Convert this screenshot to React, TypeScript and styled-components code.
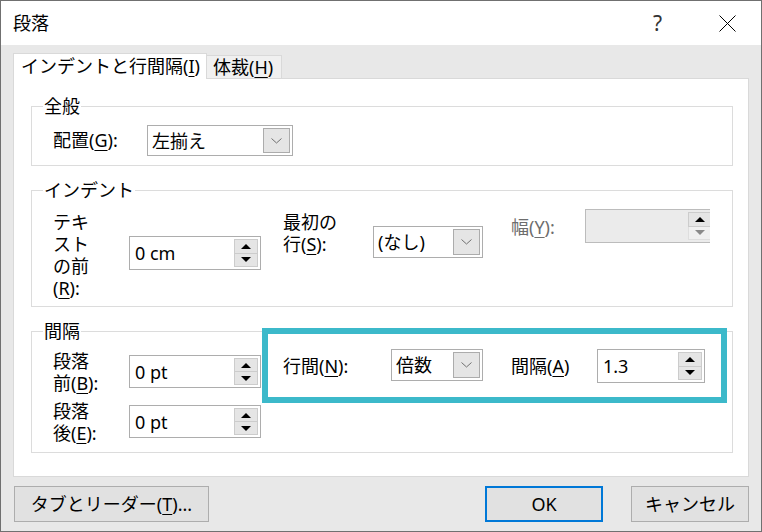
import React from "react";
import styled, { createGlobalStyle } from "styled-components";

const FONT = `"Noto Sans", "Noto Sans CJK JP", sans-serif`;

const GlobalStyle = createGlobalStyle`
  html, body { margin: 0; padding: 0; background: #ffffff; }
  body { font-family: ${FONT}; }
`;

const Window = styled.div`
  width: 762px;
  height: 532px;
  box-sizing: border-box;
  border: 1px solid #707070;
  background: #e8e8e8;
  display: flex;
  flex-direction: column;
  font-family: ${FONT};
  font-size: 18px;
  color: #000;
`;

const TitleBar = styled.div`
  height: 44px;
  flex: none;
  background: #ffffff;
  display: flex;
  align-items: center;
  padding-left: 12px;
`;

const Title = styled.div`
  flex: 1;
  line-height: 24px;
`;

const HelpGlyph = styled.span`
  width: 10px;
  font-size: 21px;
  line-height: 24px;
  color: #333;
  margin-right: 56px;
`;

const CloseIcon = styled.svg`
  width: 17px;
  height: 17px;
  margin-right: 25px;
  margin-top: 1px;
`;

const Body = styled.div`
  flex: 1;
  min-height: 0;
  display: flex;
  flex-direction: column;
  padding: 8px 12px 0 12px;
`;

const TabStrip = styled.div`
  display: flex;
  align-items: flex-end;
  height: 25px;
  flex: none;
`;

const Tab = styled.div<{ $active?: boolean }>`
  box-sizing: border-box;
  display: flex;
  align-items: center;
  line-height: 22px;
  border: 1px solid #d9d9d9;
  border-bottom: none;
  ${(p) =>
    p.$active
      ? `
    width: 194px;
    height: 26px;
    margin-bottom: -1px;
    padding: 0 0 1px 7px;
    background: #ffffff;
    position: relative;
    z-index: 1;
  `
      : `
    width: 75px;
    height: 23px;
    border-left: none;
    padding-left: 6px;
    background: #f0f0f0;
  `}
`;

const Panel = styled.div`
  flex: 1;
  box-sizing: border-box;
  background: #ffffff;
  border: 1px solid #d9d9d9;
  padding: 17px 15px 0 17px;
  display: flex;
  flex-direction: column;
  gap: 14px;
`;

const Group = styled.fieldset`
  margin: 0;
  padding: 0;
  min-width: 0;
  border: 1px solid #dcdcdc;
`;

const Legend = styled.legend`
  margin-left: 11px;
  padding: 0 1px;
  font-size: 18px;
  line-height: 20px;
`;

const GroupBody = styled.div<{ $pt: number; $pb: number }>`
  padding: ${(p) => p.$pt}px 0 ${(p) => p.$pb}px 21px;
  display: flex;
  flex-direction: column;
  gap: 6px;
`;

const Row = styled.div`
  display: flex;
  align-items: flex-start;
`;

const Label = styled.div<{ $w: number; $mt?: number; $ml?: number; $muted?: boolean }>`
  flex: none;
  width: ${(p) => p.$w}px;
  margin-top: ${(p) => p.$mt ?? 0}px;
  margin-left: ${(p) => p.$ml ?? 0}px;
  line-height: 22px;
  color: ${(p) => (p.$muted ? "#6d6d6d" : "#000")};
`;

const Key = styled.span`
  text-decoration: underline;
  text-decoration-thickness: 1px;
  text-underline-offset: 3px;
`;

const Combo = styled.div<{ $w: number; $h: number; $mt?: number }>`
  flex: none;
  box-sizing: border-box;
  width: ${(p) => p.$w}px;
  height: ${(p) => p.$h}px;
  margin-top: ${(p) => p.$mt ?? 0}px;
  border: 1px solid #adadad;
  background: #ffffff;
  display: flex;
`;

const FieldText = styled.div<{ $pl?: number }>`
  flex: 1;
  display: flex;
  align-items: center;
  padding-left: ${(p) => p.$pl ?? 4}px;
  line-height: 22px;
  white-space: nowrap;
`;

const ComboButton = styled.div`
  width: 27px;
  margin: 2px 2px 2px 0;
  box-sizing: border-box;
  background: #e5e5e5;
  border: 1px solid #acacac;
  display: flex;
  align-items: center;
  justify-content: center;
`;

const Spin = styled.div<{ $w: number; $h: number; $mt?: number; $disabled?: boolean }>`
  flex: none;
  box-sizing: border-box;
  width: ${(p) => p.$w}px;
  height: ${(p) => p.$h}px;
  margin-top: ${(p) => p.$mt ?? 0}px;
  border: 1px solid ${(p) => (p.$disabled ? "#bcbcbc" : "#adadad")};
  background: ${(p) => (p.$disabled ? "#ebebeb" : "#ffffff")};
  display: flex;
`;

const SpinColumn = styled.div`
  width: 24px;
  margin: 2px 2px 2px 0;
  display: flex;
  flex-direction: column;
`;

const SpinButton = styled.div<{ $faded?: boolean }>`
  flex: 1;
  box-sizing: border-box;
  background: ${(p) => (p.$faded ? "#f0f0f0" : "#e5e5e5")};
  border: 1px solid ${(p) => (p.$faded ? "#dedede" : "#cccccc")};
  display: flex;
  align-items: center;
  justify-content: center;
  & + & {
    border-top: none;
  }
`;

const Clip = styled.div<{ $w: number; $mt?: number }>`
  flex: none;
  width: ${(p) => p.$w}px;
  overflow: hidden;
  margin-top: ${(p) => p.$mt ?? 0}px;
`;

const Highlighted = styled.div`
  position: relative;
  display: flex;
  align-items: flex-start;
  margin-left: 22px;
  &::before {
    content: "";
    position: absolute;
    left: -21px;
    top: -21px;
    width: 465px;
    height: 75px;
    box-sizing: border-box;
    border: 6px solid #3cb9ca;
    pointer-events: none;
    z-index: 2;
  }
`;

const Footer = styled.div`
  flex: none;
  display: flex;
  align-items: center;
  padding: 9px 0 9px 1px;
`;

const Button = styled.button<{ $w: number; $primary?: boolean; $ml?: number }>`
  box-sizing: border-box;
  width: ${(p) => p.$w}px;
  height: 36px;
  margin-left: ${(p) => p.$ml ?? 0}px;
  background: #e1e1e1;
  border: ${(p) => (p.$primary ? "2px solid #0078d7" : "1px solid #adadad")};
  font-family: ${FONT};
  font-size: 18px;
  line-height: 22px;
  color: #000;
  padding: 0;
  border-radius: 0;
`;

const Spacer = styled.div`
  flex: 1;
`;

const Chevron = () => (
  <svg width="11" height="6" viewBox="0 0 11 6">
    <polyline points="0.5,0.5 5.5,5 10.5,0.5" fill="none" stroke="#707070" strokeWidth="1" />
  </svg>
);

const Arrow = ({ dir, color = "#000" }: { dir: "up" | "down"; color?: string }) => (
  <svg width="10" height="5" viewBox="0 0 10 5">
    <polygon points={dir === "up" ? "0,5 10,5 5,0" : "0,0 10,0 5,5"} fill={color} />
  </svg>
);

const Dropdown = ({ value, w, h, mt }: { value: string; w: number; h: number; mt?: number }) => (
  <Combo $w={w} $h={h} $mt={mt}>
    <FieldText>{value}</FieldText>
    <ComboButton>
      <Chevron />
    </ComboButton>
  </Combo>
);

const Spinner = ({
  value,
  w,
  h,
  mt,
  disabled,
}: {
  value: string;
  w: number;
  h: number;
  mt?: number;
  disabled?: boolean;
}) => (
  <Spin $w={w} $h={h} $mt={mt} $disabled={disabled}>
    <FieldText $pl={5}>{value}</FieldText>
    <SpinColumn>
      <SpinButton>
        <Arrow dir="up" />
      </SpinButton>
      <SpinButton $faded={disabled}>
        <Arrow dir="down" color={disabled ? "#8a8a8a" : "#000"} />
      </SpinButton>
    </SpinColumn>
  </Spin>
);

export default function App() {
  return (
    <>
      <GlobalStyle />
      <Window>
        <TitleBar>
          <Title>段落</Title>
          <HelpGlyph>?</HelpGlyph>
          <CloseIcon viewBox="0 0 17 17">
            <line x1="0.5" y1="0.5" x2="16.5" y2="16.5" stroke="#000" strokeWidth="1" />
            <line x1="16.5" y1="0.5" x2="0.5" y2="16.5" stroke="#000" strokeWidth="1" />
          </CloseIcon>
        </TitleBar>
        <Body>
          <TabStrip>
            <Tab $active>
              インデントと行間隔(<Key>I</Key>)
            </Tab>
            <Tab>
              体裁(<Key>H</Key>)
            </Tab>
          </TabStrip>
          <Panel>
            <Group>
              <Legend>全般</Legend>
              <GroupBody $pt={9} $pb={9}>
                <Row>
                  <Label $w={94} $mt={4}>
                    配置(<Key>G</Key>):
                  </Label>
                  <Dropdown value="左揃え" w={146} h={31} />
                </Row>
              </GroupBody>
            </Group>

            <Group>
              <Legend>インデント</Legend>
              <GroupBody $pt={9} $pb={7}>
                <Row>
                  <Label $w={76} $mt={2}>
                    テキ
                    <br />
                    スト
                    <br />
                    の前
                    <br />(<Key>R</Key>):
                  </Label>
                  <Spinner value="0 cm" w={132} h={34} mt={27} />
                  <Label $w={90} $mt={2} $ml={22}>
                    最初の
                    <br />
                    行(<Key>S</Key>):
                  </Label>
                  <Dropdown value="(なし)" w={110} h={32} mt={17} />
                  <Label $w={74} $mt={7} $ml={28} $muted>
                    幅(<Key>Y</Key>):
                  </Label>
                  <Clip $w={125}>
                    <Spinner value="" w={130} h={34} disabled />
                  </Clip>
                </Row>
              </GroupBody>
            </Group>

            <Group>
              <Legend>間隔</Legend>
              <GroupBody $pt={8} $pb={8}>
                <Row>
                  <Label $w={76} $mt={1}>
                    段落
                    <br />
                    前(<Key>B</Key>):
                  </Label>
                  <Spinner value="0 pt" w={132} h={33} mt={6} />
                  <Highlighted>
                    <Label $w={108} $mt={6}>
                      行間(<Key>N</Key>):
                    </Label>
                    <Dropdown value="倍数" w={92} h={32} />
                    <Label $w={86} $mt={6} $ml={28}>
                      間隔(<Key>A</Key>)
                    </Label>
                    <Spinner value="1.3" w={108} h={34} />
                  </Highlighted>
                </Row>
                <Row>
                  <Label $w={76}>
                    段落
                    <br />
                    後(<Key>E</Key>):
                  </Label>
                  <Spinner value="0 pt" w={132} h={33} mt={5} />
                </Row>
              </GroupBody>
            </Group>
          </Panel>
          <Footer>
            <Button $w={195}>
              タブとリーダー(<Key>T</Key>)...
            </Button>
            <Spacer />
            <Button $w={118} $primary>
              OK
            </Button>
            <Button $w={118} $ml={28}>
              キャンセル
            </Button>
          </Footer>
        </Body>
      </Window>
    </>
  );
}
